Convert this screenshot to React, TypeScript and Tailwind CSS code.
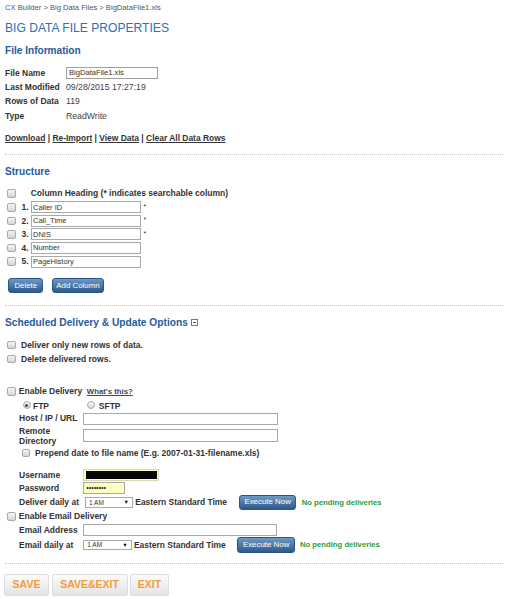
// Big Data File Properties page — CX Builder.
import React from 'react'

const Check = ({ className = '' }: { className?: string }) => (
  <span
    className={`inline-block w-[8.5px] h-[8.5px] shrink-0 rounded-[2px] border border-[#a9a9a9] bg-linear-to-b from-[#f5f5f5] to-[#d4d4d4] ${className}`}
  />
)

const Radio = ({ on = false }: { on?: boolean }) => (
  <span className="inline-flex w-[8px] h-[8px] shrink-0 rounded-full border border-[#a9a9a9] bg-linear-to-b from-[#f8f8f8] to-[#d8d8d8] items-center justify-center">
    {on && <span className="w-[3px] h-[3px] rounded-full bg-[#444]" />}
  </span>
)

const BlueBtn = ({ label, className = '' }: { label: string; className?: string }) => (
  <span
    className={`inline-flex items-center justify-center shrink-0 rounded-[3px] border border-[#2b5585] bg-linear-to-b from-[#6d99c6] to-[#2c5a8a] text-white text-[7.9px] ${className}`}
  >
    {label}
  </span>
)

const Select = ({ className = '' }: { className?: string }) => (
  <span
    className={`inline-flex items-center justify-between shrink-0 h-[10.5px] border border-[#a9a9a9] bg-white pl-[3px] pr-[3px] text-[6.5px] text-[#333] ${className}`}
  >
    <span>1 AM</span>
    <span className="text-[5.5px] text-[#111]">▼</span>
  </span>
)

export default function App() {
  return (
    <div className="w-[508px] h-[599px] overflow-hidden bg-white px-[5px] font-['Liberation_Sans',Arial,sans-serif] text-[#333]">

      {/* ── Header ─────────────────────────────────────────────── */}
      <div className="h-[16px] flex items-center text-[7.6px] text-[#555]">
        CX Builder &gt; Big Data Files &gt; BigDataFile1.xls
      </div>
      <div className="h-[24px] flex items-center text-[12.1px] text-[#2d6fb7]">
        BIG DATA FILE PROPERTIES
      </div>

      {/* ── File information ───────────────────────────────────── */}
      <div className="h-[22px] flex items-center text-[10.1px] font-bold text-[#1f5c9f]">
        File Information
      </div>
      <div className="mt-[4px] h-[14px] flex items-center">
        <span className="w-[61px] font-bold text-[8.5px]">File Name</span>
        <span className="w-[92px] h-[12.5px] border border-[#a0a0a0] flex items-center pl-[2px] text-[7.6px]">
          BigDataFile1.xls
        </span>
      </div>
      {[
        ['Last Modified', '09/28/2015 17:27:19'],
        ['Rows of Data', '119'],
        ['Type', 'ReadWrite'],
      ].map(([k, v]) => (
        <div key={k} className="h-[14.5px] flex items-center">
          <span className="w-[61px] font-bold text-[8.5px]">{k}</span>
          <span className="text-[8.7px] text-[#444]">{v}</span>
        </div>
      ))}
      <div className="mt-[7.5px] h-[14px] flex items-center font-bold text-[8.45px] text-[#333] whitespace-pre">
        <span className="underline">Download</span>
        <span> | </span>
        <span className="underline">Re-Import</span>
        <span> | </span>
        <span className="underline">View Data</span>
        <span> | </span>
        <span className="underline">Clear All Data Rows</span>
      </div>

      <div className="mt-[9px] border-t border-dotted border-[#c4c4c4]" />

      {/* ── Structure ──────────────────────────────────────────── */}
      <div className="mt-[5.5px] h-[22px] flex items-center text-[10.1px] font-bold text-[#1f5c9f]">
        Structure
      </div>
      <div className="mt-[4px] h-[14px] flex items-center">
        <Check className="ml-[2px]" />
        <span className="ml-[15.2px] font-bold text-[8.5px]">
          Column Heading (* indicates searchable column)
        </span>
      </div>
      {[
        ['1.', 'Caller ID', true],
        ['2.', 'Call_Time', true],
        ['3.', 'DNIS', true],
        ['4.', 'Number', false],
        ['5.', 'PageHistory', false],
      ].map(([n, name, star]) => (
        <div key={n as string} className="h-[13.6px] flex items-center">
          <Check className="ml-[2px]" />
          <span className="ml-[6px] w-[9px] font-bold text-[8.5px]">{n}</span>
          <span className="w-[110px] h-[12px] border border-[#a9a9a9] flex items-center pl-[1.5px] text-[7.5px] text-[#333]">
            {name}
          </span>
          {star && <span className="ml-[3px] text-[7px] self-start mt-[1px]">*</span>}
        </div>
      ))}
      <div className="mt-[9.8px] h-[15px] flex items-center">
        <BlueBtn label="Delete" className="ml-[3.3px] w-[35px] h-[15px]" />
        <BlueBtn label="Add Column" className="ml-[8.4px] w-[52.6px] h-[15px]" />
      </div>

      <div className="mt-[11.7px] border-t border-dotted border-[#c4c4c4]" />

      {/* ── Scheduled delivery ─────────────────────────────────── */}
      <div className="mt-[5.3px] h-[22px] flex items-center text-[10.2px] font-bold text-[#1f5c9f]">
        Scheduled Delivery &amp; Update Options
        <span className="ml-[3px] w-[7px] h-[7px] border border-[#777] flex items-center justify-center">
          <span className="w-[3.5px] h-[1px] bg-[#555]" />
        </span>
      </div>
      <div className="mt-[4.7px] h-[14px] flex items-center">
        <Check className="ml-[2px]" />
        <span className="ml-[5.5px] font-bold text-[8.5px]">Deliver only new rows of data.</span>
      </div>
      <div className="h-[14.5px] flex items-center">
        <Check className="ml-[2px]" />
        <span className="ml-[5.5px] font-bold text-[8.5px]">Delete delivered rows.</span>
      </div>

      <div className="mt-[18.2px] h-[14px] flex items-center">
        <Check className="ml-[2px]" />
        <span className="ml-[3.3px] w-[68px] font-bold text-[8.5px]">Enable Delivery</span>
        <span className="underline font-bold text-[7.8px] text-[#3a4a5a]">What's this?</span>
      </div>
      <div className="h-[13.3px] flex items-center font-bold text-[8.5px]">
        <span className="ml-[17.7px] w-[64.6px] flex items-center">
          <Radio on />
          <span className="ml-[2.3px] mt-[2px]">FTP</span>
        </span>
        <Radio />
        <span className="ml-[3.5px] mt-[2px]">SFTP</span>
      </div>
      <div className="h-[13.5px] flex items-center">
        <span className="ml-[14px] w-[64.3px] font-bold text-[8.5px]">Host / IP / URL</span>
        <span className="w-[195px] h-[12.3px] border border-[#a9a9a9]" />
      </div>
      <div className="h-[20.5px] flex items-center">
        <span className="ml-[14px] w-[64.3px] font-bold text-[8.5px] leading-[10px]">
          Remote
          <br />
          Directory
        </span>
        <span className="w-[195px] h-[12.4px] border border-[#a9a9a9]" />
      </div>
      <div className="h-[14px] flex items-center">
        <Check className="ml-[16.7px]" />
        <span className="ml-[4.8px] font-bold text-[8.5px]">
          Prepend date to file name (E.g. 2007-01-31-filename.xls)
        </span>
      </div>

      <div className="mt-[8.5px] h-[13px] flex items-center">
        <span className="ml-[14px] w-[64.3px] font-bold text-[8.5px]">Username</span>
        <span className="w-[76px] h-[12px] bg-[#ffffc0] border border-[#d8d8b0] flex items-center justify-center">
          <span className="w-[71px] h-[8px] bg-[#050505]" />
        </span>
      </div>
      <div className="h-[13px] flex items-center">
        <span className="ml-[14px] w-[64.3px] font-bold text-[8.5px]">Password</span>
        <span className="w-[41.7px] h-[12px] bg-[#ffffc0] border border-[#a9a9a9] flex items-center pl-[2px] text-[7px] leading-none text-[#222]">
          ••••••••
        </span>
      </div>
      <div className="h-[16px] flex items-center">
        <span className="ml-[14px] w-[66px] font-bold text-[8.5px]">Deliver daily at</span>
        <Select className="w-[48px]" />
        <span className="ml-[2.3px] w-[104px] font-bold text-[8.45px]">Eastern Standard Time</span>
        <BlueBtn label="Execute Now" className="w-[56.7px] h-[15.7px]" />
        <span className="ml-[5.7px] font-bold text-[7.7px] text-[#2f9a3a]">No pending deliveries</span>
      </div>
      <div className="h-[12.5px] flex items-center">
        <Check className="ml-[2px]" />
        <span className="ml-[3.3px] font-bold text-[8.5px]">Enable Email Delivery</span>
      </div>
      <div className="h-[14px] flex items-center">
        <span className="ml-[14px] w-[63.7px] font-bold text-[8.5px]">Email Address</span>
        <span className="w-[194.6px] h-[12.7px] border border-[#a9a9a9]" />
      </div>
      <div className="h-[16px] flex items-center">
        <span className="ml-[14px] w-[64.3px] font-bold text-[8.5px]">Email daily at</span>
        <Select className="w-[48.4px]" />
        <span className="ml-[2.3px] w-[103.3px] font-bold text-[8.45px]">Eastern Standard Time</span>
        <BlueBtn label="Execute Now" className="w-[57.7px] h-[15.3px]" />
        <span className="ml-[5px] font-bold text-[7.7px] text-[#2f9a3a]">No pending deliveries</span>
      </div>

      <div className="mt-[10.3px] border-t border-dotted border-[#c4c4c4]" />

      {/* ── Footer actions ─────────────────────────────────────── */}
      <div className="mt-[10px] flex items-center gap-[2.5px] -ml-[1px]">
        {[
          ['SAVE', 'w-[45px]'],
          ['SAVE&EXIT', 'w-[76px]'],
          ['EXIT', 'w-[39px]'],
        ].map(([label, w]) => (
          <span
            key={label}
            className={`${w} h-[21.4px] flex items-center justify-center rounded-[2px] border border-[#dedede] bg-linear-to-b from-[#fbfbfb] to-[#e4e4e4] font-bold text-[10.5px] text-[#f39a3b]`}
          >
            {label}
          </span>
        ))}
      </div>
    </div>
  )
}
